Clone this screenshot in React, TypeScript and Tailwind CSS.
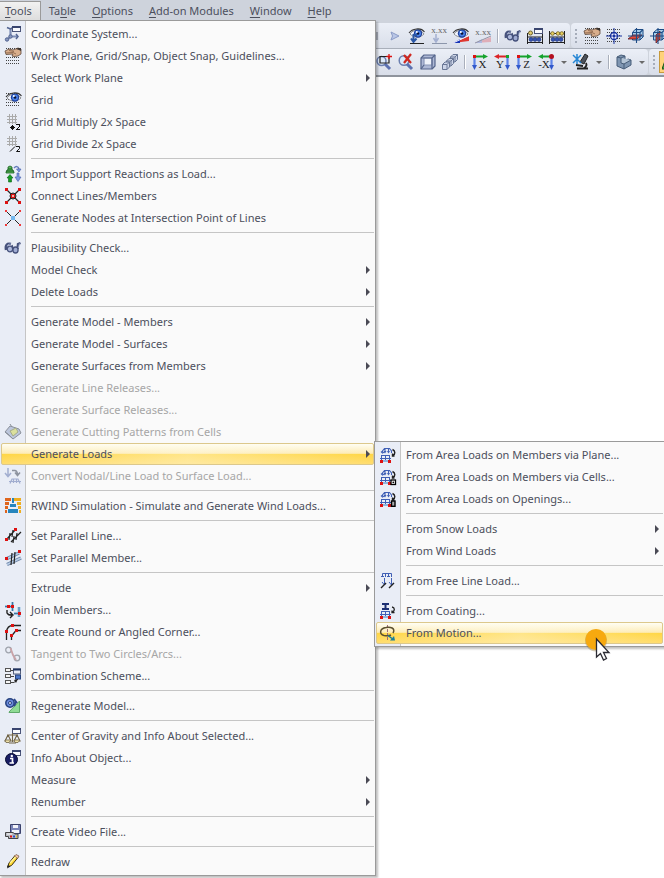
import type { ReactNode } from "react";

const K = "#222222";
const B = "#3f5fb5";
const N = "#1c2f73";
const R = "#dd1111";
const S = "#8c96ab";

function Dots({ rows }: { rows: number[] }) {
  return (
    <g stroke="#444" strokeDasharray="1 1" shapeRendering="crispEdges">
      {rows.map((y) => (
        <path key={y} d={`M1 ${y}.5H15`} />
      ))}
    </g>
  );
}

const miniWindow = (
  <g shapeRendering="crispEdges">
    <rect x="7.5" y="0.5" width="8" height="5" fill="#f8f9fd" stroke="#4a5478" />
    <path d="M7 1H16" stroke="#39456f" strokeWidth="2" />
  </g>
);

const eye = (
  <g>
    <path d="M1 6C4 1 12 1 15 6C11 10 5 10 1 6Z" fill="#f3f6ff" stroke="#777" strokeWidth=".8" />
    <circle cx="9" cy="5.500" r="4.200" fill="#1e3f9c" />
    <circle cx="9" cy="5.500" r="3" fill="#4b82e6" />
    <circle cx="9" cy="5.500" r="1.300" fill="#0a1030" />
    <circle cx="7.800" cy="4" r="1" fill="#fff" />
    <path d="M0 5C3 .5 12 -1 15.500 4" fill="none" stroke="#333" strokeWidth="1.100" />
  </g>
);

const hand = (
  <g>
    <path d="M0 3L4 1L8 2L13 0L16 1V6L13 8L9 8.500L7 8L8 6L1 6.500Z" fill="#d9ae8c" stroke="#5d4638" strokeWidth=".8" />
    <path d="M1 5L8 4.500L11 6M4 2.500L9 3.500" fill="none" stroke="#8c664d" strokeWidth=".9" />
    <path d="M11 1L13 0L16 0V3L14 2Z" fill="#3a332f" />
  </g>
);

const glasses = (
  <g fill="none" stroke="#46527c" strokeWidth="1.300">
    <path d="M6 4C2 3 0 5 1 10M15.500 3L13 4L12.500 9" strokeWidth="2.400" />
    <path d="M6 4C3 4 2 5 2.500 8M14.500 3.500L13.500 8" stroke="#a7b2d6" strokeWidth=".8" />
    <ellipse cx="5" cy="9" rx="2.800" ry="2.800" fill="#aeb9dc" />
    <ellipse cx="10.500" cy="10" rx="2.600" ry="3" fill="#9fabd2" />
    <path d="M7 8L9 9M7 5L8 8" />
  </g>
);

const smallLoad = (
  <path
    d="M2.500 5V4L4.500 1.500H9.500L11.500 4V6M5 1V5M8.500 1V5M1 4.500L2.500 6L5 4.500M4 4L5 5.500L6 4M7.500 4L8.500 5.500L9.500 4"
    fill="none"
    stroke={B}
    strokeWidth="1.100"
  />
);

const baseLoad = (
  <g shapeRendering="crispEdges">
    <path d="M1.500 13V8.500H9.500V13M5.500 8V13M0 11.500H11" fill="none" stroke={B} />
    <path d="M3 14H8" stroke="#8fb6df" strokeWidth="2" />
    <path d="M0 13H3V16H0ZM8 13H11V16H8Z" fill={R} />
  </g>
);

const turn = (
  <path d="M12.500 2.500C15.500 4 15.500 7 13 8.500M14.500 9H12.500V6.500" fill="none" stroke={K} strokeWidth="1.400" />
);

const cube3 = (
  <g strokeLinejoin="round">
    <path d="M4.500 4.500L7 1.500H15V9L12 12H4.500Z" fill="#a6cdea" stroke="#1d4b85" />
    <path d="M0 11L5 7H14L9 11Z" fill="#e94a35" stroke="#5c1c28" strokeWidth=".8" />
    <path d="M4.500 4.500H12V12M12 4.500L15 1.500M8.500 0V15M0 8H16" fill="none" stroke="#1d4b85" strokeWidth="1.100" />
  </g>
);

const cube4 = (
  <g strokeLinejoin="round">
    <path d="M3.500 4.500L7 1.500H15V9L12 12H3.500Z" fill="#a6cdea" stroke="#1d4b85" />
    <path d="M6 7L10 3V11L6 15Z" fill="#e94a35" stroke="#5c1c28" strokeWidth=".8" />
    <path d="M3.500 4.500H12V12M12 4.500L15 1.500M8 0V16M0 8H16" fill="none" stroke="#1d4b85" strokeWidth="1.100" />
  </g>
);

function axis(label: string, horizontal: string, left: boolean) {
  return (
    <g>
      <path d={left ? "M13 2.500H4" : "M3 2.500H12"} stroke={horizontal} strokeWidth="2" />
      <path d={left ? "M5 0V5L0 2.500Z" : "M11 0V5L16 2.500Z"} fill={horizontal} />
      <path d={left ? "M13.500 4V12" : "M2.500 4V12"} stroke="#5b82e8" strokeWidth="2.200" />
      <path d={left ? "M11 11H16L13.500 16Z" : "M0 11H5L2.500 16Z"} fill="#3158cb" />
      <rect
        x={left ? 12 : 1}
        y="1"
        width="3"
        height="3"
        fill={label === "-X" ? "#b41020" : horizontal === "#15a32d" ? R : "#15a32d"}
      />
      {label === "-X" && <circle cx="13.500" cy="2.500" r="2.500" fill="#b41020" />}
      <text
        x={left ? 6 : 10.5}
        y="14"
        textAnchor="middle"
        fontFamily="Liberation Serif, serif"
        fontSize="11"
        fill={K}
      >
        {label}
      </text>
    </g>
  );
}

const icons: Record<string, ReactNode> = {
  coord: (
    <g>
      <path d="M5.500 3V10.500H12M5 11L2 14" fill="none" stroke="#7d8db5" strokeWidth="2.200" />
      <path d="M2 1.500L5.500 3L8 1.500M11 8L13 10.500L11 13" fill="none" stroke="#526492" strokeWidth="1.500" />
      <circle cx="2" cy="13.500" r="1.700" fill="#8a99c0" stroke="#526492" />
      <circle cx="5.500" cy="10.500" r="1.700" fill="#8a99c0" stroke="#526492" />
      {miniWindow}
    </g>
  ),
  work: (
    <g>
      <Dots rows={[0, 3, 9, 12, 15]} />
      {hand}
    </g>
  ),
  grid: (
    <g>
      <Dots rows={[1, 4, 7, 10, 13]} />
      <g transform="translate(1 0)">{eye}</g>
    </g>
  ),
  mul: (
    <g shapeRendering="crispEdges">
      <path d="M4.500 0V10M7.500 0V10M10.500 0V10M2 2.500H12M2 5.500H12M2 8.500H12" stroke="#aaaaaa" />
      <path
        d="M5 13.500H10M7.500 11V16M6 12L9 15M9 12L6 15M11 10.500H14.500V12.500L11.500 15.500H15"
        fill="none"
        stroke="#111"
      />
    </g>
  ),
  div: (
    <g>
      <path
        d="M4.500 0V10M7.500 0V10M10.500 0V10M2 2.500H12M2 5.500H12M2 8.500H12"
        stroke="#aaaaaa"
        shapeRendering="crispEdges"
      />
      <path d="M5 15.500L10 10.500M11 10.500H14.500V12.500L11.500 15.500H15" fill="none" stroke="#111" />
    </g>
  ),
  support: (
    <g>
      <path d="M5 0L7 1V3L9 6V7H1V6L3 3V1Z" fill="#5cb65c" stroke="#155e1c" strokeWidth=".8" />
      <path d="M1 5H9M3 3H7" stroke="#155e1c" />
      <path d="M5 8.500L8 12H6.500V16H3.500V12H2Z" fill="#159d22" stroke="#0c6517" strokeWidth=".6" />
      <path d="M9 2C11 0 13 0 14 3" fill="none" stroke="#637aba" strokeWidth="1.500" />
      <path d="M11.500 3H16L14 6ZM12 7H14V11H16L13 15.500L10 11H12Z" fill="#7f9be0" stroke="#405ba8" strokeWidth=".6" />
    </g>
  ),
  connect: (
    <g>
      <path d="M1 1L15 15M15 1L1 15" stroke={K} strokeWidth="1.200" />
      <circle cx="8" cy="8" r="3" fill="#777" stroke={K} />
      <rect x="6.500" y="6.500" width="3" height="3" fill="#f4b0a8" stroke={R} />
      <path d="M0 0H3V3H0ZM13 0H16V3H13ZM0 13H3V16H0ZM13 13H16V16H13Z" fill={R} />
    </g>
  ),
  nodes: (
    <g>
      <path d="M1 1L15 15M15 1L1 15" stroke={K} />
      <rect x="6" y="6" width="4" height="4" fill="#75b7ee" />
      <path d="M0 0H2V2H0ZM14 0H16V2H14ZM0 14H2V16H0ZM14 14H16V16H14Z" fill="#ee3939" />
    </g>
  ),
  glasses,
  cut: (
    <g stroke="#8b919b" strokeWidth="1">
      <path d="M0 8L5 2L14 5L16 9L8 15Z" fill="#bcc6dc" />
      <path d="M5 7L11 4L13 8L8 12Z" fill="#dbe09c" stroke="#a5ab8a" />
      <path d="M5 0L7 3M0 8L3 10L8 15" fill="none" />
    </g>
  ),
  convert: (
    <g fill="none" stroke="#a2aed0" strokeWidth="1.500">
      <path d="M3 0V8M0 5L3 8.500L6 5" />
      <path d="M7 2.500H10C12 3 12.500 4 12.500 7M10 4.500L12.500 7.500L15 4.500" stroke="#8d939f" />
      <path d="M5 15.500L7 11H13L15 15.500M8.500 11V15M11.500 11V15M4 13.500H16" strokeWidth="1.200" />
    </g>
  ),
  rwind: (
    <g shapeRendering="crispEdges">
      <path d="M0 0H6V3H0ZM0 4H4V7H0ZM0 8H3V11H0ZM0 12H2V15H0Z" fill="#df651d" />
      <path d="M9 0H16V3H9ZM12 4H16V7H12ZM13 8H16V11H13ZM14 12H16V15H14Z" fill="#eeae20" />
      <path d="M7 0H9V5H7ZM5 6H11V9H5ZM3 11H13V15H3Z" fill="#2685bd" />
    </g>
  ),
  parallel: (
    <g>
      <path d="M1 12L11 1M6 14L16 4M5 5L4 12M8 2L7 9M9 8L8 15M12 5L11 12" stroke={K} strokeWidth="1.200" />
      <path d="M0 10H3V13H0ZM9 0H12V3H9Z" fill={R} />
    </g>
  ),
  member: (
    <g>
      <path d="M1 9L14 3M2 14.500L16 8" stroke="#6d86a8" strokeWidth="3.500" />
      <path d="M1 9L14 3M2 14.500L16 8" stroke="#b8cce5" strokeWidth="1.500" />
      <path d="M7 3L6 15M10 2L9 14" stroke={K} strokeWidth="1.200" />
      <path d="M0 7H3V10H0ZM13 0H16V3H13Z" fill={R} />
    </g>
  ),
  join: (
    <g>
      <path d="M0 4.500H6M7.500 0V9M14 5V15M9 11.500H16" stroke="#9ac6e4" strokeWidth="3" />
      <path d="M0 4.500H6M7.500 0V9M14 5V15M9 11.500H16" stroke="#44749c" />
      <path d="M2 8V11C3 13 4 13 7 13M5 10L8 13L5 16" fill="none" stroke={K} strokeWidth="1.400" />
      <path d="M2 3H5V6H2ZM6 3H9V6H6ZM13 10H16V13H13Z" fill={R} />
    </g>
  ),
  corner: (
    <g>
      <path
        d="M1.500 16V8C2 3 5 1.500 8 1.500H16M6.500 16V12L11 6.500H16"
        fill="none"
        stroke={K}
        strokeWidth="1.300"
      />
      <path d="M0 6H3V9H0ZM6 0H9V3H6ZM5 10H8V13H5ZM10 5H13V8H10Z" fill={R} />
    </g>
  ),
  tangent: (
    <g fill="none" stroke="#9fa4ad" strokeWidth="1.300">
      <circle cx="3.500" cy="4" r="2.800" />
      <circle cx="12" cy="12" r="2.800" />
      <path d="M5.500 2L8 9L11 14" stroke="#c9a3a8" strokeWidth="1.800" />
    </g>
  ),
  scheme: (
    <g>
      <path
        d="M0.500 0.500H5.500V3.500H0.500ZM0.500 6.500H5.500V9.500H0.500ZM0.500 12.500H5.500V15.500H0.500Z"
        fill="#f5f5f5"
        stroke="#555"
        shapeRendering="crispEdges"
      />
      <path d="M6 2.500H9M6 8.500H9M6 14.500H9L13 11" stroke="#444" fill="none" />
      <rect x="8.500" y="1" width="7" height="5" fill="#e8edf8" stroke="#555f7b" />
      <path d="M8 1.500H16" stroke="#1d315e" strokeWidth="2" />
      <rect x="10.500" y="7" width="5" height="4" fill="#4c78c9" stroke="#26437e" />
      <path d="M9 12L13 11L11 15Z" fill={K} />
    </g>
  ),
  regen: (
    <g>
      <path d="M4 14L14.500 3V14.500H4Z" fill="#8edb94" stroke="#5fa86a" />
      <circle cx="5" cy="5" r="4.200" fill="#6a8bdc" stroke="#27427f" strokeWidth="1.500" />
      <circle cx="5" cy="5" r="1.500" fill="#dce4fb" stroke="#27427f" />
      <path d="M9 1L12 5M9 8L11 4" stroke="#2c478c" strokeWidth="2" />
    </g>
  ),
  gravity: (
    <g>
      {miniWindow}
      <path
        d="M7.500 5V14M4 15H11M2 7L13 7M3 7L0 13H6L3 7M12 7L9 13H15Z"
        fill="none"
        stroke="#706345"
        strokeWidth="1.100"
      />
      <path d="M0 12H6L4 14.500H1ZM9 12H15L13 14.500H10Z" fill="#f0e3ac" stroke="#706345" strokeWidth=".8" />
    </g>
  ),
  info: (
    <g>
      {miniWindow}
      <circle cx="6.500" cy="9.500" r="6" fill="#181d63" stroke="#050a30" />
      <path d="M5 8.500H7.500V12.500M4.500 13H9" fill="none" stroke="#fff" strokeWidth="1.700" />
      <circle cx="6.800" cy="6" r="1.200" fill="#fff" />
    </g>
  ),
  video: (
    <g>
      <path d="M5.500 .5H15.500V9.500H5.500Z" fill="#7a84b8" stroke="#3b426b" />
      <path d="M8 1H13V4H8ZM7 6H14V9H7Z" fill="#f2f3f9" />
      <path d="M.5 8.500H8L10 10H13V14.500H3.500V12.500H.5Z" fill="#b9bbc2" stroke="#444" />
      <path d="M2 10H7" stroke="#fff" />
      <path d="M5 11.500H7V13.500H5Z" fill={R} />
      <path d="M8 11.500H10V13.500H8Z" fill="#2c50c8" />
      <path d="M11 11.500H12V13.500H11Z" fill="#e9ba20" />
    </g>
  ),
  redraw: (
    <g>
      <path d="M2.500 13L4 9L10 1.500L13 3.500L6.500 11.500Z" fill="#ffda32" stroke="#3d3010" />
      <path d="M9.500 2L11 .5L14 2L12.500 4.500Z" fill="#f4c9b2" stroke="#76543a" strokeWidth=".7" />
      <path d="M2 14.500L3 11L5.500 12.500Z" fill={K} />
      <path d="M5 9L10.500 3" stroke="#fff5a0" strokeWidth="1.300" />
    </g>
  ),
  plane: (
    <g>
      {smallLoad}
      {baseLoad}
      {turn}
    </g>
  ),
  cells: (
    <g>
      {smallLoad}
      {baseLoad}
      {turn}
      <rect x="11" y="11" width="4.500" height="4.500" fill="#fff" stroke="#000" strokeWidth="1.300" />
      <circle cx="13.300" cy="13.300" r=".9" fill="#000" />
    </g>
  ),
  openings: (
    <g>
      {smallLoad}
      {baseLoad}
      {turn}
      <rect x="11.500" y="10" width="3.500" height="5.300" fill="#aaa" stroke="#000" strokeWidth="1.400" />
    </g>
  ),
  free: (
    <g>
      <path d="M2.500 4V.5H11.500V4M5.500 0V4M8.500 0V4M1 3.500H4M7 3.500H10" fill="none" stroke={B} />
      <path d="M4.500 5V12M2 9L4.500 12L6 10M11.500 5V12M9 9L11.500 12L14 10" fill="none" stroke={B} />
      <path d="M1 15L6 10M9 15L14 10" stroke={K} strokeWidth="1.400" />
    </g>
  ),
  coating: (
    <g>
      {baseLoad}
      <path d="M2 1H9M2 6H9M5.500 0V6" stroke={N} strokeWidth="2" />
      <path d="M12 4C15 4.500 15 8 12.500 9M14.500 9.500H12V7.500" fill="none" stroke={K} strokeWidth="1.300" />
    </g>
  ),
  motion: (
    <g fill="none">
      <path d="M7.500 0V16" stroke="#a06e7a" strokeDasharray="3 1" />
      <path d="M13 8C16 3 10 1.500 6 2.500C-.5 3.500 -1 9 4 10.500C7 11 9 11 11 10" stroke="#5c5030" strokeWidth="1.500" />
      <path d="M8 10.500L12 13.500" stroke="#167e9b" strokeWidth="1.500" />
      <path d="M15 15.500H10L14 11Z" fill="#167e9b" />
    </g>
  ),
  play: <path d="M4 4L12 8L4 12L5.500 8Z" fill="#b9c6e6" stroke="#8b9bc7" />,
  eyeLoad: (
    <g>
      {eye}
      <path d="M8 7H4.500V13M2 10.500L4.500 14L7.500 10.500" fill="none" stroke="#2b57a5" strokeWidth="2" />
      <path d="M1 15.500H15" stroke={K} />
    </g>
  ),
  values: (
    <g>
      <text x="8" y="5" textAnchor="middle" fontFamily="Liberation Serif, serif" fontSize="9" fill="#666">
        x.xx
      </text>
      <path d="M5 6V13M2.500 10L5 14L7.500 10" fill="none" stroke="#a4b0d0" strokeWidth="1.500" />
      <path d="M1 15.500H16" stroke={S} />
    </g>
  ),
  eyeResult: (
    <g>
      <path d="M0 15L16 8V13Z" fill="#df3831" />
      <path d="M0 15L7 11V15Z" fill="#1735b7" />
      <path d="M0 15L16 7.500" stroke="#eef" />
      {eye}
    </g>
  ),
  valuesResult: (
    <g>
      <text x="8" y="7" textAnchor="middle" fontFamily="Liberation Serif, serif" fontSize="9" fill="#666">
        x.xx
      </text>
      <path d="M0 15L16 9V14Z" fill="#dfaeb8" />
      <path d="M0 15L7 11V15Z" fill="#aeb8df" />
      <path d="M0 15L16 8" stroke="#9696a5" />
    </g>
  ),
  table1: (
    <g>
      <path d="M.5 5V16M15.500 5V16M0 14.500H16M0 9H16" stroke={K} />
      <g fill="#3654b4" stroke="#1b2f70" strokeWidth=".6">
        <circle cx="4" cy="11.500" r="1.900" />
        <circle cx="8" cy="11.500" r="1.900" />
        <circle cx="12" cy="11.500" r="1.900" />
      </g>
      <circle cx="3.500" cy="5" r="2" fill="#e3cd70" stroke="#6f642f" />
      {miniWindow}
    </g>
  ),
  table2: (
    <g>
      <path d="M.5 3V16M15.500 3V16M0 14.500H16M0 9H16M0 5.500H16" stroke={K} />
      <g fill="#3654b4" stroke="#1b2f70" strokeWidth=".6">
        <circle cx="4" cy="11.500" r="1.900" />
        <circle cx="8" cy="11.500" r="1.900" />
        <circle cx="12" cy="11.500" r="1.900" />
      </g>
      <g fill="#e8cf60" stroke="#706020" strokeWidth=".8">
        <circle cx="3.500" cy="5.500" r="1.800" />
        <circle cx="9" cy="5.500" r="1.800" />
        <circle cx="12.800" cy="5.500" r="1.800" />
      </g>
    </g>
  ),
  snap: (
    <g>
      <Dots rows={[1, 4, 7, 10, 13]} />
      <circle cx="8" cy="8" r="3.500" fill="#eef" stroke="#1933a0" strokeWidth="1.300" />
      <path d="M8 0V16M0 8H16" stroke="#1933a0" />
      <rect x="7" y="7" width="2" height="2" fill="#1933a0" />
    </g>
  ),
  cube3,
  cube4,
  zoomWindow: (
    <g>
      <circle cx="5.500" cy="7" r="4.500" fill="#dce9f9" stroke="#6b7fb0" strokeWidth="1.500" />
      <path d="M9 10L14 15" stroke="#5b70b0" strokeWidth="3" />
      <path d="M4 2.500H13V9H4Z" fill="none" stroke={K} strokeWidth="1.200" />
      <path d="M13 0V5M10.500 2.500H16" stroke={R} strokeWidth="1.300" />
    </g>
  ),
  zoomX: (
    <g>
      <circle cx="6" cy="6.500" r="4.800" fill="#dce9f9" stroke="#6b7fb0" strokeWidth="1.500" />
      <path d="M9 10L14 15" stroke="#5b70b0" strokeWidth="3" />
      <path d="M6 1L13 9M13 0L6 9" stroke="#cf2820" strokeWidth="2.200" />
    </g>
  ),
  box: (
    <g fill="#aeb9d6" stroke="#55658c" strokeWidth="1.200" strokeLinejoin="round">
      <path d="M1 4L4 1H15V12L12 15H1Z" />
      <path d="M4 4H12V11H4Z" fill="#eef2fa" stroke="#8a97b8" />
      <path d="M1 4H12V15M12 4L15 1M1 15L4 11" fill="none" />
    </g>
  ),
  boxes: (
    <g fill="#cdd5e8" stroke="#697795" strokeLinejoin="round">
      <path d="M8.500 3L11 .5H15.500V5.500L13 8H8.500ZM8.500 3H13V8M13 3L15.500 .5" />
      <path d="M4.500 7L7 4.500H11.500V9.500L9 12H4.500ZM4.500 7H9V12M9 7L11.500 4.500" />
      <path d="M.5 10.500L3 8H7.500V13L5 15.500H.5ZM.5 10.500H5V15.500M5 10.500L7.500 8" />
    </g>
  ),
  axisX: axis("X", "#15a32d", false),
  axisY: axis("Y", "#dc2428", true),
  axisZ: axis("Z", "#15a32d", false),
  axisN: axis("-X", "#15a32d", true),
  scope: (
    <g>
      <path d="M12 0L15 2L11 10L7 8Z" fill="#4c525c" stroke="#222" />
      <path d="M13 9C14 11 13 13 11 14M4 14.500H15M3 11L10 12" fill="none" stroke="#222" strokeWidth="1.800" />
      <path d="M0 1L8 9M8 1L0 9M4 0V10" stroke="#2686d4" strokeWidth="1.500" />
    </g>
  ),
  solid: (
    <g stroke="#465c78" strokeLinejoin="round">
      <path d="M1 3L5 1L9 2V7L12 5L15 6V11L8 15L1 12Z" fill="#7f96b2" />
      <path d="M1 3L5 4V9L8 10L15 6" fill="#b3c4d6" />
      <path d="M5 4L9 2M8 10V15" />
    </g>
  ),
};

function Icon({ name }: { name: string }) {
  return (
    <svg width="16" height="16" viewBox="0 0 16 16" aria-hidden="true" className="shrink-0 overflow-visible">
      {icons[name]}
    </svg>
  );
}

type Item = { label: string; icon?: string; sub?: boolean; off?: boolean; hot?: boolean };

const toolsGroups: Item[][] = [
  [
    { label: "Coordinate System...", icon: "coord" },
    { label: "Work Plane, Grid/Snap, Object Snap, Guidelines...", icon: "work" },
    { label: "Select Work Plane", sub: true },
    { label: "Grid", icon: "grid" },
    { label: "Grid Multiply 2x Space", icon: "mul" },
    { label: "Grid Divide 2x Space", icon: "div" },
  ],
  [
    { label: "Import Support Reactions as Load...", icon: "support" },
    { label: "Connect Lines/Members", icon: "connect" },
    { label: "Generate Nodes at Intersection Point of Lines", icon: "nodes" },
  ],
  [
    { label: "Plausibility Check...", icon: "glasses" },
    { label: "Model Check", sub: true },
    { label: "Delete Loads", sub: true },
  ],
  [
    { label: "Generate Model - Members", sub: true },
    { label: "Generate Model - Surfaces", sub: true },
    { label: "Generate Surfaces from Members", sub: true },
    { label: "Generate Line Releases...", off: true },
    { label: "Generate Surface Releases...", off: true },
    { label: "Generate Cutting Patterns from Cells", icon: "cut", off: true },
    { label: "Generate Loads", sub: true, hot: true },
    { label: "Convert Nodal/Line Load to Surface Load...", icon: "convert", off: true },
  ],
  [{ label: "RWIND Simulation - Simulate and Generate Wind Loads...", icon: "rwind" }],
  [
    { label: "Set Parallel Line...", icon: "parallel" },
    { label: "Set Parallel Member...", icon: "member" },
  ],
  [
    { label: "Extrude", sub: true },
    { label: "Join Members...", icon: "join" },
    { label: "Create Round or Angled Corner...", icon: "corner" },
    { label: "Tangent to Two Circles/Arcs...", icon: "tangent", off: true },
    { label: "Combination Scheme...", icon: "scheme" },
  ],
  [{ label: "Regenerate Model...", icon: "regen" }],
  [
    { label: "Center of Gravity and Info About Selected...", icon: "gravity" },
    { label: "Info About Object...", icon: "info" },
    { label: "Measure", sub: true },
    { label: "Renumber", sub: true },
  ],
  [{ label: "Create Video File...", icon: "video" }],
  [{ label: "Redraw", icon: "redraw" }],
];

const loadGroups: Item[][] = [
  [
    { label: "From Area Loads on Members via Plane...", icon: "plane" },
    { label: "From Area Loads on Members via Cells...", icon: "cells" },
    { label: "From Area Loads on Openings...", icon: "openings" },
  ],
  [
    { label: "From Snow Loads", sub: true },
    { label: "From Wind Loads", sub: true },
  ],
  [{ label: "From Free Line Load...", icon: "free" }],
  [
    { label: "From Coating...", icon: "coating" },
    { label: "From Motion...", icon: "motion", hot: true },
  ],
];

function MenuRow({ item }: { item: Item }) {
  const tone = item.off ? "text-[#a6a6a6]" : "text-[#4c4f5c]";
  const back = item.hot
    ? "border-[#dcc88c] bg-[linear-gradient(90deg,transparent,rgba(255,252,235,0.4)_50%,transparent),linear-gradient(180deg,#fffef4_0%,#fdebb4_47%,#ffd644_50%,#ffdd70_100%)]"
    : "border-transparent";
  return (
    <button
      type="button"
      role="menuitem"
      disabled={item.off}
      aria-haspopup={item.sub ? "menu" : undefined}
      className={`flex h-[22px] w-full items-center rounded-xs border pl-[3px] text-left ${tone} ${back}`}
    >
      <span className="flex w-[26px] shrink-0">{item.icon && <Icon name={item.icon} />}</span>
      <span className="flex-1 whitespace-nowrap">{item.label}</span>
      {item.sub && (
        <svg width="4" height="8" viewBox="0 0 4 8" className="mr-[3px]" aria-hidden="true">
          <path d="M0 0L4 4L0 8Z" fill="#4a4a55" />
        </svg>
      )}
    </button>
  );
}

function Menu({ groups, label }: { groups: Item[][]; label: string }) {
  return (
    <div
      role="menu"
      aria-label={label}
      className="border border-[#9a9a9a] bg-[linear-gradient(90deg,#e9edf6_25px,#c5c5c5_25px,#c5c5c5_26px,#fafafa_26px)] px-px py-0.5 shadow-[2px_2px_2px_rgba(0,0,0,0.25)]"
    >
      {groups.map((group, i) => (
        <div key={i}>
          {i > 0 && (
            <div role="separator" className="h-2 pt-[3px] pl-[30px]">
              <div className="h-px w-full bg-[#c5c5c5]" />
            </div>
          )}
          {group.map((item) => (
            <MenuRow key={item.label} item={item} />
          ))}
        </div>
      ))}
    </div>
  );
}

const titles = [
  ["", "T", "ools"],
  ["Ta", "b", "le"],
  ["", "O", "ptions"],
  ["", "A", "dd-on Modules"],
  ["", "W", "indow"],
  ["", "H", "elp"],
];

function Tool({ name }: { name: string }) {
  return (
    <button type="button" aria-label={name} className="flex w-[22px] shrink-0 justify-center">
      <Icon name={name} />
    </button>
  );
}

function Split() {
  return <div className="mx-[3px] h-3.5 w-0.5 shrink-0 border-l border-[#a9afbb] bg-white" />;
}

function Drop() {
  return (
    <button type="button" aria-label="More" className="flex w-[13px] shrink-0 justify-center">
      <svg width="6" height="3" viewBox="0 0 6 3" aria-hidden="true">
        <path d="M0 0H6L3 3Z" fill="#6a6a6a" />
      </svg>
    </button>
  );
}

function Grip() {
  return (
    <div className="mx-1 h-3.5 w-0.5 shrink-0 bg-[repeating-linear-gradient(180deg,#a6adba_0_2px,transparent_2px_4px)]" />
  );
}

const bar = "flex items-center bg-linear-to-b from-[#ebeff7] to-[#d9dee9]";

export default function App() {
  return (
    <div className="relative min-h-screen overflow-hidden bg-white font-['Noto_Sans',sans-serif] text-[11px] text-[#4c4f5c]">
      <nav role="menubar" aria-label="Main" className="flex h-[23px] items-start bg-[#ced3dc] pt-px">
        {titles.map(([a, b, c], i) => (
          <button
            key={b + c}
            type="button"
            role="menuitem"
            className={
              i === 0
                ? "h-5 border-t border-r border-[#9a9a9a] bg-linear-to-b from-[#f2f2f2] to-[#dcdcdc] pr-2 pl-[5px]"
                : "h-5 border-t border-transparent px-2"
            }
          >
            {a}
            <span className="underline underline-offset-2">{b}</span>
            {c}
          </button>
        ))}
      </nav>
      <header className="border-b-2 border-[#8f949d] bg-[#ced3dc]">
        <div className="flex h-[26px] border-b border-[#a9afba] pl-[376px]">
          <div className={`${bar} rounded-r-sm`}>
            <div className="mr-1.5 h-2 w-0.5 bg-[#a9afbb]" />
            <Tool name="play" />
            <Tool name="eyeLoad" />
            <Tool name="values" />
            <Tool name="eyeResult" />
            <Tool name="valuesResult" />
            <Split />
            <Tool name="glasses" />
            <Tool name="table1" />
            <Tool name="table2" />
            <div className="w-0.5" />
          </div>
          <div className={`${bar} ml-px flex-1 rounded-l-sm`}>
            <Grip />
            <Tool name="work" />
            <Tool name="snap" />
            <Tool name="cube3" />
            <Tool name="cube4" />
          </div>
        </div>
        <div className="flex h-[26px] pl-[373px]">
          <div className={`${bar} rounded-r-sm`}>
            <Tool name="zoomWindow" />
            <Tool name="zoomX" />
            <Tool name="box" />
            <Tool name="boxes" />
            <Split />
            <Tool name="axisX" />
            <Tool name="axisY" />
            <Tool name="axisZ" />
            <Tool name="axisN" />
            <Drop />
            <Tool name="scope" />
            <Drop />
            <Split />
            <Tool name="solid" />
            <Drop />
          </div>
          <div className={`${bar} ml-px flex-1 rounded-l-sm`}>
            <Grip />
            <button
              type="button"
              aria-label="Show loads"
              className="flex h-[22px] w-[22px] shrink-0 items-center border border-[#c79a3c] bg-[#ffd27a] pl-0.5"
            >
              <svg width="16" height="16" viewBox="0 0 16 16" aria-hidden="true">
                <path d="M0 15L4 4L12 4L8 15Z" fill="#3aa03a" stroke="#1f4f1f" />
              </svg>
            </button>
          </div>
        </div>
      </header>
      <div className="absolute top-5 -left-px w-[377px]">
        <Menu groups={toolsGroups} label="Tools" />
      </div>
      <div className="absolute top-[441px] -right-px left-[374px]">
        <Menu groups={loadGroups} label="Generate Loads" />
      </div>
      <svg
        width="30"
        height="36"
        viewBox="0 0 30 36"
        className="absolute top-[627px] left-[584px]"
        aria-hidden="true"
      >
        <circle cx="12" cy="13.500" r="11" fill="#8a6a20" opacity=".35" />
        <circle cx="12" cy="12.500" r="10.500" fill="#f7a90f" />
        <path
          d="M12.500 12V30L16.500 26.500L19.500 33L22.500 31.500L19.500 25.500H25Z"
          fill="#fff"
          stroke="#2b2b33"
          strokeWidth="1.300"
        />
      </svg>
    </div>
  );
}
